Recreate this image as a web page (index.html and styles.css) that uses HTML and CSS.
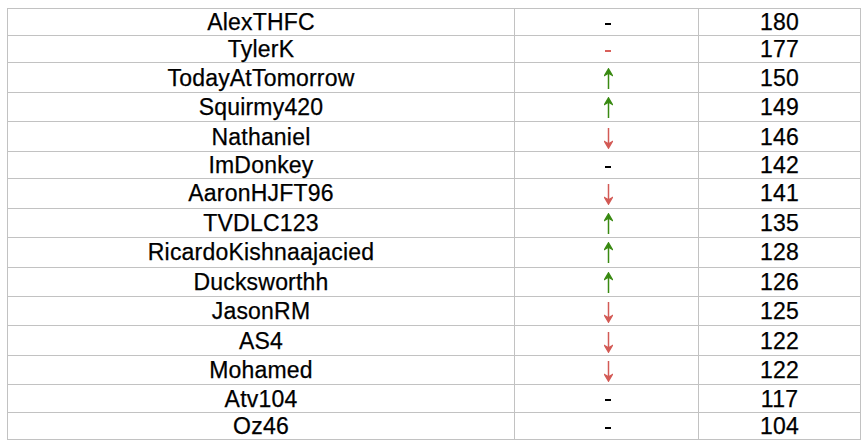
FILE: index.html
```html
<!DOCTYPE html>
<html>
<head>
<meta charset="utf-8">
<link rel="stylesheet" href="styles.css">
</head>
<body>
<table class="board">
  <colgroup><col class="c-name"><col class="c-move"><col class="c-score"></colgroup>
  <tbody>
    <tr><td>AlexTHFC</td><td><span class="dash"></span></td><td>180</td></tr>
    <tr><td>TylerK</td><td><span class="dash red"></span></td><td>177</td></tr>
    <tr><td>TodayAtTomorrow</td><td><svg class="arrow up" viewBox="0 0 9 22" width="9" height="22"><path d="M4.5 21V3" /><path class="head" d="M1 7L4.5 1L8 7L4.5 5Z"/></svg></td><td>150</td></tr>
    <tr><td>Squirmy420</td><td><svg class="arrow up" viewBox="0 0 9 22" width="9" height="22"><path d="M4.5 21V3" /><path class="head" d="M1 7L4.5 1L8 7L4.5 5Z"/></svg></td><td>149</td></tr>
    <tr><td>Nathaniel</td><td><svg class="arrow down" viewBox="0 0 9 22" width="9" height="22"><path d="M4.5 1V19" /><path class="head" d="M1 15L4.5 21L8 15L4.5 17Z"/></svg></td><td>146</td></tr>
    <tr><td>ImDonkey</td><td><span class="dash"></span></td><td>142</td></tr>
    <tr><td>AaronHJFT96</td><td><svg class="arrow down" viewBox="0 0 9 22" width="9" height="22"><path d="M4.5 1V19" /><path class="head" d="M1 15L4.5 21L8 15L4.5 17Z"/></svg></td><td>141</td></tr>
    <tr><td>TVDLC123</td><td><svg class="arrow up" viewBox="0 0 9 22" width="9" height="22"><path d="M4.5 21V3" /><path class="head" d="M1 7L4.5 1L8 7L4.5 5Z"/></svg></td><td>135</td></tr>
    <tr><td>RicardoKishnaajacied</td><td><svg class="arrow up" viewBox="0 0 9 22" width="9" height="22"><path d="M4.5 21V3" /><path class="head" d="M1 7L4.5 1L8 7L4.5 5Z"/></svg></td><td>128</td></tr>
    <tr><td>Ducksworthh</td><td><svg class="arrow up" viewBox="0 0 9 22" width="9" height="22"><path d="M4.5 21V3" /><path class="head" d="M1 7L4.5 1L8 7L4.5 5Z"/></svg></td><td>126</td></tr>
    <tr><td>JasonRM</td><td><svg class="arrow down" viewBox="0 0 9 22" width="9" height="22"><path d="M4.5 1V19" /><path class="head" d="M1 15L4.5 21L8 15L4.5 17Z"/></svg></td><td>125</td></tr>
    <tr><td>AS4</td><td><svg class="arrow down" viewBox="0 0 9 22" width="9" height="22"><path d="M4.5 1V19" /><path class="head" d="M1 15L4.5 21L8 15L4.5 17Z"/></svg></td><td>122</td></tr>
    <tr><td>Mohamed</td><td><svg class="arrow down" viewBox="0 0 9 22" width="9" height="22"><path d="M4.5 1V19" /><path class="head" d="M1 15L4.5 21L8 15L4.5 17Z"/></svg></td><td>122</td></tr>
    <tr><td>Atv104</td><td><span class="dash"></span></td><td>117</td></tr>
    <tr><td>Oz46</td><td><span class="dash"></span></td><td>104</td></tr>
  </tbody>
</table>
</body>
</html>
```
FILE: styles.css
```css
html, body {
  margin: 0;
  padding: 0;
  background: #ffffff;
}
.board {
  margin: 8px 0 0 7px;
  border-collapse: collapse;
  table-layout: fixed;
  width: 853px;
  height: 432px;
  font-family: "Liberation Sans", Arial, sans-serif;
  font-size: 23px;
  letter-spacing: 0.2px;
  color: #000;
  -webkit-text-stroke: 0.25px #000;
}
.c-name { width: 507px; }
.c-move { width: 184px; }
.c-score { width: 162px; }
.board td {
  border: 1px solid #c2c2c2;
  padding: 0;
  text-align: center;
  vertical-align: middle;
  line-height: 22px;
}
.board td:nth-child(2) { padding-left: 3px; }
.dash {
  display: inline-block;
  width: 6px;
  height: 2px;
  background: #000;
  vertical-align: middle;
}
.dash.red { background: #d9605a; }
.arrow {
  display: inline-block;
  vertical-align: middle;
}
.arrow path {
  fill: none;
  stroke-width: 1.5;
}
.arrow .head { stroke: none; }
.arrow.up path { stroke: #3a8a12; }
.arrow.up .head { fill: #2f8a10; }
.arrow.down path { stroke: #d35a55; }
.arrow.down .head { fill: #d35a55; }
```
